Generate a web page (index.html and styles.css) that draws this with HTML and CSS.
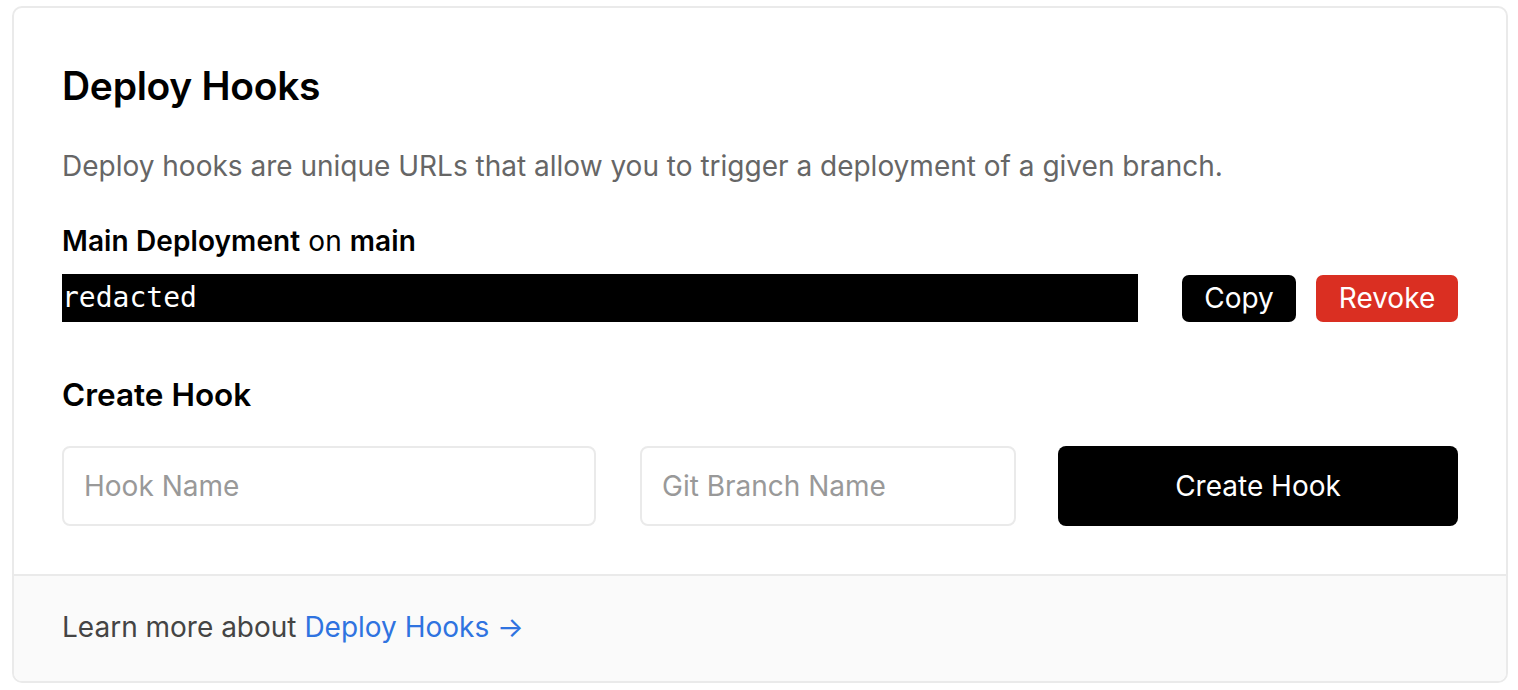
FILE: index.html
```html
<!DOCTYPE html>
<html>
<head>
<meta charset="utf-8">
<link rel="stylesheet" href="styles.css">
</head>
<body>
<div class="card">
  <div class="card-body">
    <h1 class="title">Deploy Hooks</h1>
    <p class="desc">Deploy hooks are unique URLs that allow you to trigger a deployment of a given branch.</p>
    <div class="hook">
      <div class="hook-label"><b>Main Deployment</b> on <b>main</b></div>
      <div class="hook-row">
        <div class="hook-url">redacted</div>
        <button class="btn btn-black">Copy</button>
        <button class="btn btn-red">Revoke</button>
      </div>
    </div>
    <h2 class="subtitle">Create Hook</h2>
    <div class="create-row">
      <input class="field field-name" type="text" placeholder="Hook Name">
      <input class="field field-branch" type="text" placeholder="Git Branch Name">
      <button class="btn-create">Create Hook</button>
    </div>
  </div>
  <div class="card-footer">
    Learn more about <a class="link" href="#">Deploy Hooks →</a>
  </div>
</div>
</body>
</html>
```
FILE: styles.css
```css
* { box-sizing: border-box; }
html, body { background: #fff; }
body {
  margin: 0;
  padding: 6px 10px 6px 12px;
  font-family: Inter, "Noto Sans", sans-serif;
  color: #000;
}
.card {
  border: 2px solid #eaeaea;
  border-radius: 10px;
  overflow: hidden;
  background: #fff;
}
.card-body {
  padding: 52px 48px 48px 48px;
}
.title {
  margin: 0;
  font-size: 39px;
  font-weight: 600;
  line-height: 52px;
  letter-spacing: -0.3px;
}
.desc {
  margin: 34px 0 0;
  font-size: 28px;
  line-height: 40px;
  color: #666;
}
.hook { margin-top: 35px; }
.hook-label {
  font-size: 28px;
  line-height: 40px;
  letter-spacing: 0.1px;
}
.hook-label b { font-weight: 600; }
.hook-row {
  display: flex;
  align-items: center;
  margin-top: 13px;
}
.hook-url {
  width: 1076px;
  height: 48px;
  background: #000;
  color: #fff;
  font-family: "DejaVu Sans Mono", monospace;
  font-size: 28px;
  line-height: 48px;
  margin-right: 44px;
}
.btn {
  height: 47px;
  border: none;
  border-radius: 7px;
  color: #fff;
  font-family: Inter, "Noto Sans", sans-serif;
  font-size: 28px;
  padding: 0;
}
.btn-black { background: #000; width: 114px; margin-right: 20px; }
.btn-red { background: #da2f22; width: 142px; }
.subtitle {
  margin: 51px 0 0;
  font-size: 31.5px;
  font-weight: 600;
  line-height: 44px;
}
.create-row {
  display: flex;
  margin-top: 29px;
}
.field {
  height: 80px;
  border: 2px solid #eaeaea;
  border-radius: 8px;
  padding: 0 20px;
  font-family: Inter, "Noto Sans", sans-serif;
  font-size: 28px;
  outline: none;
}
.field::placeholder { color: #999; }
.field-name { width: 534px; margin-right: 44px; }
.field-branch { width: 376px; margin-right: 42px; }
.btn-create {
  width: 400px;
  height: 80px;
  background: #000;
  color: #fff;
  border: none;
  border-radius: 8px;
  font-family: Inter, "Noto Sans", sans-serif;
  font-size: 28px;
}
.card-footer {
  border-top: 2px solid #eaeaea;
  background: #fafafa;
  padding: 31px 48px 34px;
  font-size: 28px;
  line-height: 40px;
  color: #444;
}
.link { color: #2f73e0; text-decoration: none; }
```
